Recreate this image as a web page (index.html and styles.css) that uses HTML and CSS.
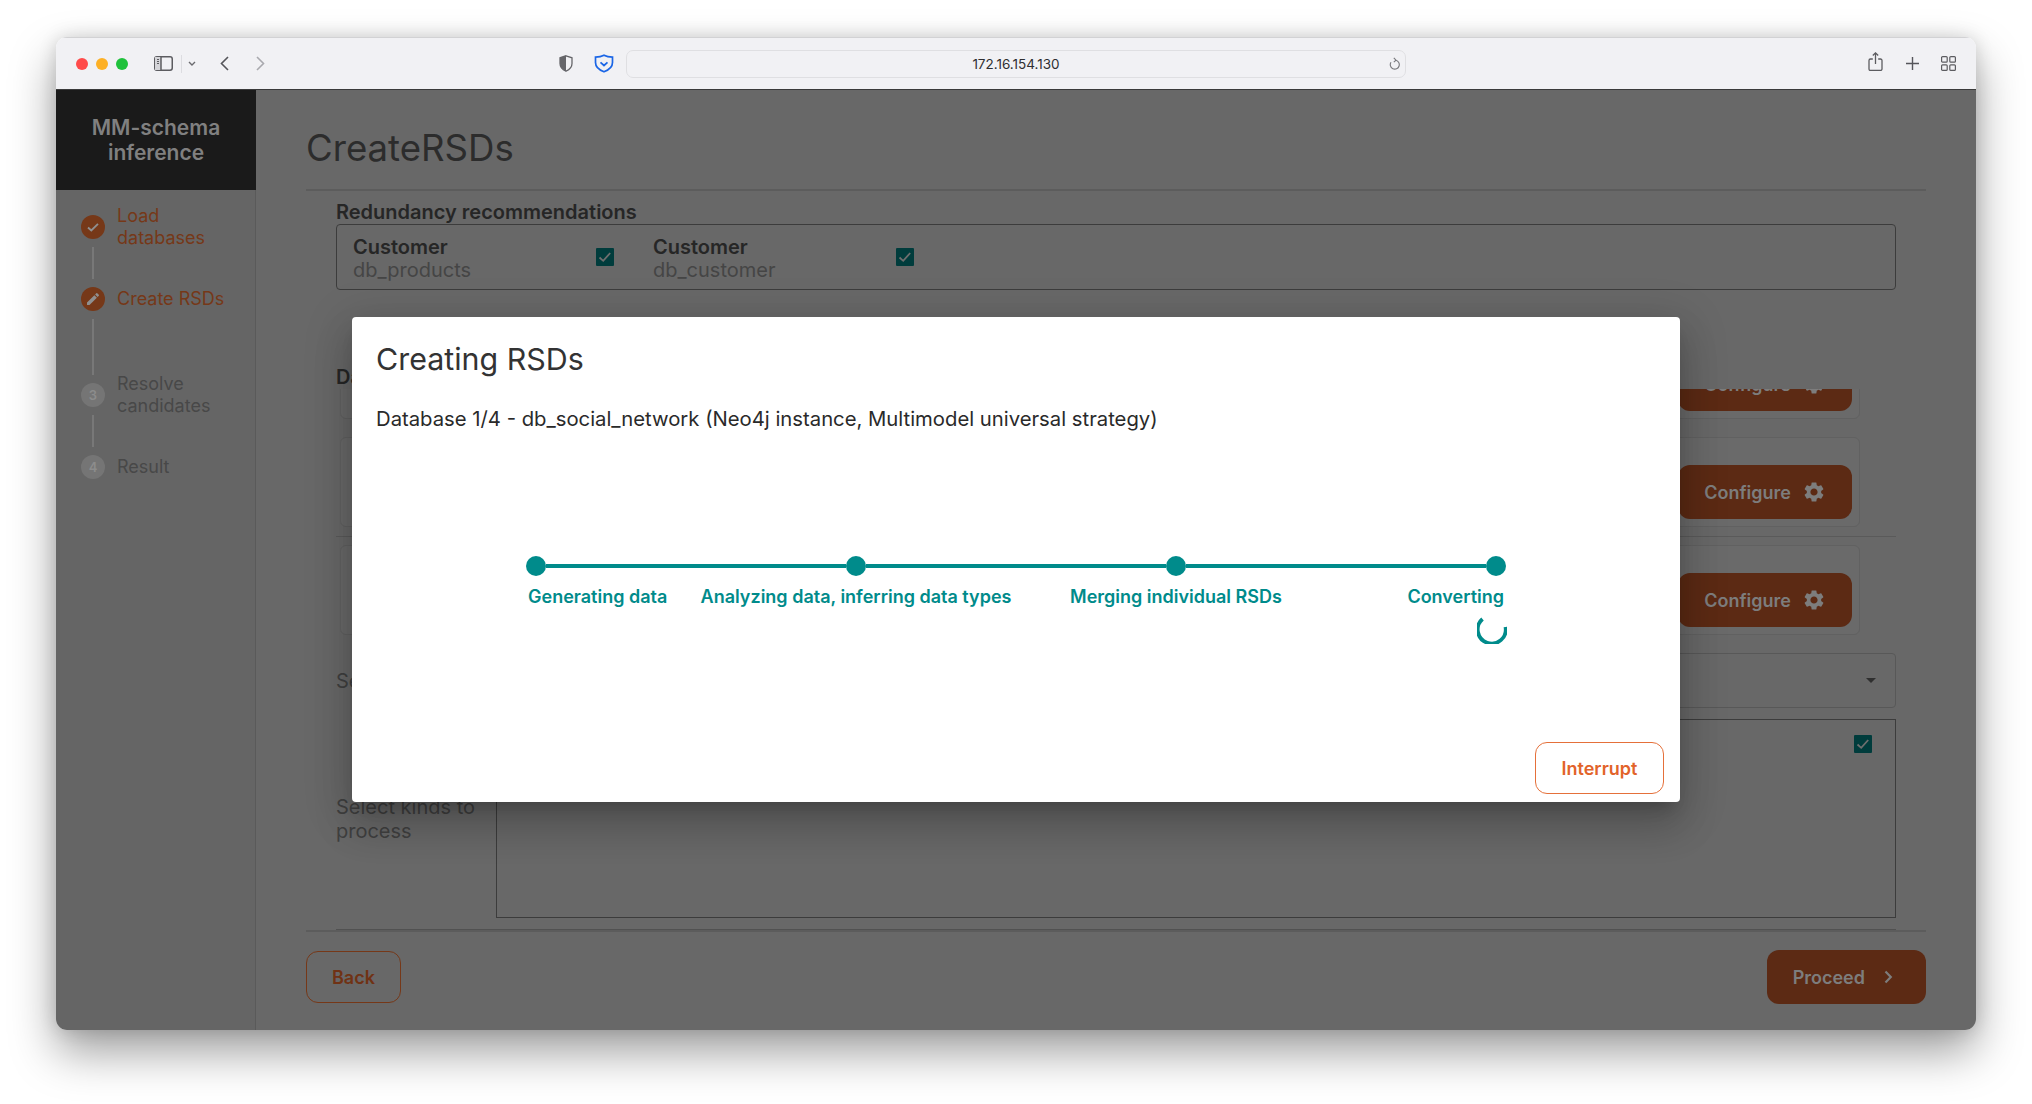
FILE: index.html
```html
<!DOCTYPE html>
<html lang="en">
<head>
<meta charset="utf-8">
<title>MM-schema inference</title>
<link rel="stylesheet" href="styles.css">
</head>
<body>
<svg class="defs" width="0" height="0"><defs>
  <path id="gear-path" d="M19.140 12.940c.04-.3.06-.61.06-.94 0-.32-.02-.64-.07-.94l2.030-1.580c.18-.14.23-.41.12-.61l-1.920-3.320c-.12-.22-.37-.29-.59-.22l-2.390.96c-.5-.38-1.030-.7-1.620-.94l-.36-2.540c-.04-.24-.24-.41-.48-.41h-3.840c-.24 0-.43.17-.47.41l-.36 2.540c-.59.24-1.130.57-1.620.94l-2.390-.96c-.22-.08-.47 0-.59.22L2.740 8.870c-.12.21-.08.47.12.61l2.030 1.580c-.05.3-.09.63-.09.94s.02.64.07.94l-2.030 1.580c-.18.14-.23.41-.12.61l1.920 3.320c.12.22.37.29.59.22l2.390-.96c.5.38 1.030.7 1.620.94l.36 2.540c.05.24.24.41.48.41h3.840c.24 0 .44-.17.47-.41l.36-2.540c.59-.24 1.130-.56 1.620-.94l2.390.96c.22.08.47 0 .59-.22l1.920-3.320c.12-.22.07-.47-.12-.61l-2.010-1.580zM12 15.600c-1.980 0-3.600-1.620-3.600-3.600s1.620-3.600 3.600-3.600 3.600 1.620 3.600 3.600-1.620 3.600-3.600 3.600z"/>
  <path id="check-path" d="M3.500 9.500l3.700 3.300 7-7.800" fill="none" stroke="#6e6e6e" stroke-width="1.800"/>
</defs></svg>
<div class="window">
  <header class="toolbar">
    <span class="light red"></span><span class="light yellow"></span><span class="light green"></span>
    <svg class="tb-sidebar" width="19" height="15" viewBox="0 0 19 15"><rect x=".75" y=".75" width="17.5" height="13.5" rx="2.2" fill="none" stroke="#5c5c60" stroke-width="1.5"/><rect x="1" y="1" width="6" height="13" fill="#d4d4d8"/><path d="M7 1v13" stroke="#5c5c60" stroke-width="1.5"/><path d="M3 3.500h2M3 5.500h2M3 7.500h2" stroke="#5c5c60" stroke-width="1.2"/></svg>
    <span class="tb-divider"></span>
    <svg class="tb-caret" width="8" height="5" viewBox="0 0 8 5"><path d="M1 1l3 3 3-3" fill="none" stroke="#6a6a6e" stroke-width="1.4"/></svg>
    <svg class="tb-back" width="9" height="15" viewBox="0 0 9 15"><path d="M8 1L1.500 7.500 8 14" fill="none" stroke="#55555a" stroke-width="1.6"/></svg>
    <svg class="tb-forward" width="9" height="15" viewBox="0 0 9 15"><path d="M1 1l6.500 6.500L1 14" fill="none" stroke="#a9a9ae" stroke-width="1.6"/></svg>
    <svg class="tb-shield" width="14" height="17" viewBox="0 0 14 17"><path d="M7 .8L13 2.800v5.700c0 3.600-2.600 6.200-6 7.700-3.400-1.500-6-4.100-6-7.700V2.800z" fill="#f1f1f4" stroke="#66666a" stroke-width="1.300"/><path d="M7 .8v15.400c-3.400-1.500-6-4.100-6-7.700V2.800z" fill="#66666a"/></svg>
    <svg class="tb-guard" width="20" height="19" viewBox="0 0 20 19"><path d="M10 1.200c2.500 1.400 5 1.900 8.500 1.900v5.400c0 4.200-3.400 7.400-8.500 9.300-5.100-1.900-8.500-5.100-8.500-9.300V3.100c3.500 0 6-.5 8.500-1.900z" fill="none" stroke="#1b66e6" stroke-width="1.700"/><path d="M6.500 8.300L10 11.500l3.500-3.200" fill="none" stroke="#1b66e6" stroke-width="1.700"/></svg>
    <div class="address">
      <span class="address-text">172.16.154.130</span>
      <svg class="tb-reload" width="11" height="14" viewBox="0 0 11 14"><path d="M6.500 3.200A4.500 4.500 0 1 1 2 5.200" fill="none" stroke="#77777b" stroke-width="1.100"/><path d="M4.800 .8l2.200 2.300-2.200 2" fill="none" stroke="#77777b" stroke-width="1.100"/></svg>
    </div>
    <svg class="tb-share" width="15" height="19" viewBox="0 0 15 19"><path d="M4.800 7H2.500A1.500 1.500 0 0 0 1 8.500v8.500a1.500 1.500 0 0 0 1.500 1.500h10a1.500 1.500 0 0 0 1.500-1.500V8.500A1.500 1.500 0 0 0 12.500 7h-2.300" fill="none" stroke="#5c5c60" stroke-width="1.300"/><path d="M7.500 12V1M4.800 3.500l2.700-2.600 2.700 2.600" fill="none" stroke="#5c5c60" stroke-width="1.300"/></svg>
    <svg class="tb-plus" width="13" height="13" viewBox="0 0 13 13"><path d="M6.500 0v13M0 6.500h13" stroke="#55555a" stroke-width="1.400"/></svg>
    <svg class="tb-tabs" width="15" height="15" viewBox="0 0 15 15"><g fill="none" stroke="#5c5c60" stroke-width="1.200"><rect x=".6" y=".6" width="5.600" height="5.600" rx="1"/><rect x="8.800" y=".6" width="5.600" height="5.600" rx="1"/><rect x=".6" y="8.800" width="5.600" height="5.600" rx="1"/><rect x="8.800" y="8.800" width="5.600" height="5.600" rx="1"/></g></svg>
  </header>

  <div class="app">
    <aside class="sidebar">
      <div class="brand">MM-schema inference</div>
      <ol class="steps">
        <li class="step done">
          <div class="step-rail">
            <span class="step-dot"><svg width="16" height="16" viewBox="0 0 16 16"><path d="M3 8.500l3.300 3L13 4.800" fill="none" stroke="#8f8f8f" stroke-width="1.900"/></svg></span>
            <span class="step-line"></span>
          </div>
          <span class="step-label">Load databases</span>
        </li>
        <li class="step done">
          <div class="step-rail">
            <span class="step-dot"><svg width="16" height="16" viewBox="0 0 24 24"><path d="M3 17.250V21h3.750L17.810 9.940l-3.750-3.750L3 17.250zM20.710 7.040a1 1 0 0 0 0-1.410l-2.340-2.340a1 1 0 0 0-1.410 0l-1.830 1.830 3.750 3.750 1.830-1.830z" fill="#8f8f8f"/></svg></span>
            <span class="step-line long"></span>
          </div>
          <span class="step-label">Create RSDs</span>
        </li>
        <li class="step">
          <div class="step-rail">
            <span class="step-dot">3</span>
            <span class="step-line"></span>
          </div>
          <span class="step-label">Resolve candidates</span>
        </li>
        <li class="step">
          <div class="step-rail">
            <span class="step-dot">4</span>
          </div>
          <span class="step-label">Result</span>
        </li>
      </ol>
    </aside>

    <main class="main">
      <h1 class="page-title">CreateRSDs</h1>
      <div class="content">
        <h2 class="section-title">Redundancy recommendations</h2>
        <div class="redundancy">
          <div class="rec-item">
            <div class="rec-text"><strong>Customer</strong><span>db_products</span></div>
            <span class="checkbox"><svg width="18" height="18" viewBox="0 0 18 18"><use href="#check-path"/></svg></span>
          </div>
          <div class="rec-item">
            <div class="rec-text"><strong>Customer</strong><span>db_customer</span></div>
            <span class="checkbox"><svg width="18" height="18" viewBox="0 0 18 18"><use href="#check-path"/></svg></span>
          </div>
        </div>

        <h2 class="section-title databases-title">Databases</h2>
        <div class="db-scroll">
          <div class="db-group">
            <div class="db-card first"><button class="btn solid">Configure <svg class="gear" width="24" height="24" viewBox="0 0 24 24"><use href="#gear-path"/></svg></button></div>
            <div class="db-card"><button class="btn solid">Configure <svg class="gear" width="24" height="24" viewBox="0 0 24 24"><use href="#gear-path"/></svg></button></div>
          </div>
          <div class="db-card"><button class="btn solid">Configure <svg class="gear" width="24" height="24" viewBox="0 0 24 24"><use href="#gear-path"/></svg></button></div>
        </div>

        <div class="field">
          <span class="field-label single">Select database</span>
          <div class="select"><span class="select-arrow"></span></div>
        </div>
        <div class="field">
          <span class="field-label">Select kinds to process</span>
          <div class="kinds">
            <span class="checkbox"><svg width="18" height="18" viewBox="0 0 18 18"><use href="#check-path"/></svg></span>
          </div>
        </div>
      </div>
      <footer class="actions">
        <button class="btn outline">Back</button>
        <button class="btn solid">Proceed <svg class="gear" width="24" height="24" viewBox="0 0 24 24"><path d="M9.500 6.500L14.800 12l-5.300 5.500" fill="none" stroke="#7d7d7d" stroke-width="2.200"/></svg></button>
      </footer>
    </main>

    <section class="modal" role="dialog">
      <h2 class="modal-title">Creating RSDs</h2>
      <p class="modal-text">Database 1/4 - db_social_network (Neo4j instance, Multimodel universal strategy)</p>
      <div class="stepper">
        <div class="pstep start"><span class="pdot"></span><span class="plabel">Generating data</span></div>
        <span class="pline"></span>
        <div class="pstep"><span class="pdot"></span><span class="plabel">Analyzing data, inferring data types</span></div>
        <span class="pline"></span>
        <div class="pstep"><span class="pdot"></span><span class="plabel">Merging individual RSDs</span></div>
        <span class="pline"></span>
        <div class="pstep end"><span class="pdot"></span><span class="plabel">Converting</span>
          <svg class="spinner" width="30" height="30" viewBox="0 0 30 30"><path d="M28.500 13A14 14 0 1 1 5.500 5" fill="none" stroke="#008b8b" stroke-width="3.800"/></svg>
        </div>
      </div>
      <div class="modal-actions"><button class="btn interrupt">Interrupt</button></div>
    </section>
  </div>
</div>
</body>
</html>
```

FILE: styles.css
```css
* { box-sizing: border-box; }
html, body { margin: 0; height: 100%; }
body {
  background: #fff;
  font-family: Inter, "Liberation Sans", sans-serif;
  overflow: hidden;
  padding: 37px 0 0 56px;
}
h1, h2, p, ol { margin: 0; padding: 0; }
button { font: inherit; }
.defs { display: block; height: 0; }

.window {
  width: 1920px;
  height: 993px;
  border-radius: 11px;
  overflow: hidden;
  box-shadow: 0 22px 46px rgba(0, 0, 0, .38), 0 0 18px rgba(0, 0, 0, .14);
  display: flex;
  flex-direction: column;
}

/* browser chrome */
.toolbar {
  height: 53px;
  flex: none;
  background: #f1f1f4;
  border-top: 1px solid #d2d2d4;
  border-bottom: 1px solid #3a3a3a;
  display: flex;
  align-items: center;
  padding-left: 20px;
}
.light { width: 12px; height: 12px; border-radius: 50%; margin-right: 8px; }
.red { background: #ff4b4a; }
.yellow { background: #fdb025; }
.green { background: #1fc13b; }
.tb-sidebar { margin-left: 18px; }
.tb-divider { width: 1px; height: 18px; background: #dcdce0; margin-left: 8px; }
.tb-caret { margin-left: 6px; }
.tb-back { margin-left: 24px; }
.tb-forward { margin-left: 27px; }
.tb-shield { margin-left: 294px; }
.tb-guard { margin-left: 21px; }
.address {
  width: 780px;
  height: 28px;
  margin-left: 12px;
  border: 1.5px solid #dfdfe2;
  border-radius: 7px;
  display: flex;
  align-items: center;
  justify-content: center;
  position: relative;
  font-size: 13.500px;
  color: #2e2e30;
}
.tb-reload { position: absolute; right: 5px; top: 6px; }
.tb-share { margin-left: 462px; margin-top: -4px; }
.tb-plus { margin-left: 23px; }
.tb-tabs { margin-left: 22px; }

/* app */
.app { flex: 1; display: flex; position: relative; min-height: 0; }
.sidebar {
  width: 200px;
  flex: none;
  background: #656565;
  border-right: 1px solid #5a5a5a;
}
.brand {
  height: 100px;
  background: #1a1a1a;
  color: #808080;
  font-size: 21px;
  line-height: 25px;
  font-weight: 600;
  text-align: center;
  display: flex;
  align-items: center;
  justify-content: center;
  padding: 0 24px;
  margin-right: -1px;
}
.steps { list-style: none; padding: 25px 0 0 25px; }
.step { display: flex; gap: 12px; font-size: 18px; line-height: 22px; color: #484848; }
.step.done { color: #763818; }
.step-rail { width: 24px; flex: none; display: flex; flex-direction: column; align-items: center; }
.step-dot {
  width: 24px;
  height: 24px;
  border-radius: 50%;
  background: #757575;
  color: #8c8c8c;
  font-size: 13px;
  font-weight: 600;
  display: flex;
  align-items: center;
  justify-content: center;
}
.done .step-dot { background: #763818; }
.step-line { width: 2px; height: 32px; margin: 8px 0; background: #787878; }
.step-line.long { height: 56px; }
.step-label { height: 24px; width: 120px; display: flex; align-items: center; }

.main {
  flex: 1;
  background: #686868;
  padding: 0 50px;
  display: flex;
  flex-direction: column;
  min-width: 0;
}
.page-title {
  height: 101px;
  flex: none;
  border-bottom: 2px solid #5c5c5c;
  color: #2c2c2c;
  font-size: 36.600px;
  font-weight: 400;
  line-height: 44px;
  padding-top: 36px;
}
.content {
  margin: 0 30px;
  padding-top: 10px;
  height: 739px;
  flex: none;
  border-bottom: 1px solid #515151;
}
.section-title { font-size: 20px; line-height: 23px; font-weight: 600; color: #262626; }
.redundancy {
  height: 66px;
  border: 1px solid #3c3c3c;
  border-radius: 4px;
  padding: 11px 16px 0;
  display: flex;
}
.rec-item { width: 300px; display: flex; }
.rec-text { width: 243px; display: flex; flex-direction: column; font-size: 20px; line-height: 23px; color: #454545; }
.rec-text strong { font-weight: 600; color: #262626; }
.checkbox { width: 18px; height: 18px; background: #003c3c; border-radius: 1px; margin-top: 12px; display: block; }
.checkbox svg { display: block; }
.databases-title { margin-top: 76px; }
.db-scroll { height: 252px; overflow: hidden; }
.db-group { border-bottom: 1px solid #5a5a5a; padding-bottom: 9px; display: flex; flex-direction: column; gap: 18px; margin-bottom: 8px; }
.db-card {
  height: 90px;
  width: 1520px;
  margin-left: 4px;
  background: #6a6a6a;
  border: 1px solid #616161;
  border-radius: 6px;
  padding: 0 7px 7px 16px;
  display: flex;
  align-items: flex-end;
  justify-content: flex-end;
}
.db-card.first { margin-top: -60px; }
.btn {
  height: 54px;
  border-radius: 12px;
  border: 0;
  padding: 0 26px;
  font-size: 18px;
  font-weight: 600;
  display: inline-flex;
  align-items: center;
  gap: 11px;
}
.btn.solid { background: #5c2a14; color: #7d7d7d; }
.gear { fill: #7d7d7d; display: block; }
.field { display: flex; align-items: center; font-size: 20px; line-height: 24px; color: #404040; margin-top: 12px; }
.field + .field { margin-top: 11px; }
.field-label { width: 160px; flex: none; padding-right: 10px; }
.field-label.single { white-space: nowrap; }
.select {
  flex: 1;
  height: 55px;
  border: 1px solid #585858;
  border-radius: 4px;
  display: flex;
  align-items: center;
  justify-content: flex-end;
  padding-right: 19px;
}
.select-arrow { width: 0; height: 0; border: 5px solid transparent; border-top-color: #2f2f2f; border-bottom: 0; }
.kinds {
  flex: 1;
  height: 199px;
  border: 1px solid #3c3c3c;
  padding: 3px 23px 0 0;
  display: flex;
  justify-content: flex-end;
}
.actions { flex: 1; border-top: 2px solid #5c5c5c; display: flex; justify-content: space-between; align-items: flex-start; padding-top: 18px; }
.btn.outline { height: 52px; margin-top: 1px; background: transparent; border: 1px solid #763818; color: #703214; padding: 0 25px; }

/* modal */
.modal {
  position: absolute;
  left: 296px;
  top: 227px;
  width: 1328px;
  height: 485px;
  background: #fff;
  border-radius: 4px;
  box-shadow: 0 11px 15px -7px rgba(0,0,0,.2), 0 24px 38px 3px rgba(0,0,0,.14), 0 9px 46px 8px rgba(0,0,0,.12);
  padding: 24px 16px 8px 24px;
  display: flex;
  flex-direction: column;
}
.modal-title { font-size: 30.400px; line-height: 36px; font-weight: 400; color: #333; }
.modal-text { font-size: 20.270px; line-height: 24px; color: #2a2a2a; margin-top: 30px; }
.stepper { width: 980px; margin: 125px 0 0 150px; display: flex; align-items: flex-start; height: 140px; }
.pstep { width: 20px; flex: none; display: flex; flex-direction: column; align-items: center; }
.pstep.start { align-items: flex-start; }
.pstep.end { align-items: flex-end; }
.pdot { width: 20px; height: 20px; border-radius: 50%; background: #008b8b; }
.pline { flex: 1; height: 4px; margin-top: 8px; background: #008b8b; }
.plabel { white-space: nowrap; color: #008b8b; font-size: 18px; font-weight: 600; line-height: 24px; margin-top: 9px; }
.start .plabel { margin-left: 2px; }
.end .plabel { margin-right: 2px; }
.spinner { display: block; margin: 5px -1px 0 0; flex: none; }
.modal-actions { display: flex; justify-content: flex-end; margin-top: auto; }
.btn.interrupt { width: 129px; height: 52px; padding: 0; justify-content: center; background: #fff; border: 1px solid #e5703a; color: #e2632a; }
```
